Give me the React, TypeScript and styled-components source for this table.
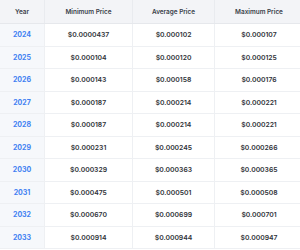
import styled, { createGlobalStyle } from 'styled-components';

const Global = createGlobalStyle`
	body {
		margin: 0;
		background: #ffffff;
		font-family: Inter, "Noto Sans", sans-serif;
	}
`;

const Table = styled.table`
	width: 300px;
	border-collapse: collapse;
	table-layout: fixed;
`;

const HeadCell = styled.th<{ $w: number }>`
	width: ${(p) => p.$w}px;
	height: 23px;
	padding: 0;
	background: #f3f4f7;
	color: #3a3f4a;
	font-size: 6.4px;
	font-weight: 600;
	text-align: center;
	border-right: 1px solid #e9ebef;
	border-bottom: 1px solid #e6e8ec;
	&:last-child {
		border-right: none;
	}
`;

const Row = styled.tr`
	height: 22.5px;
	border-bottom: 1px solid #eef0f3;
`;

const YearCell = styled.td`
	padding: 0;
	background: #f6f8fb;
	color: #3f80f2;
	font-size: 7px;
	font-weight: 700;
	text-align: center;
	border-right: 1px solid #eef0f3;
`;

const PriceCell = styled.td`
	padding: 0;
	color: #2f3238;
	font-size: 6.8px;
	font-weight: 600;
	text-align: center;
	border-right: 1px solid #eef0f3;
	&:last-child {
		border-right: none;
	}
`;

const rows = [
	['2024', '$0.0000437', '$0.000102', '$0.000107'],
	['2025', '$0.000104', '$0.000120', '$0.000125'],
	['2026', '$0.000143', '$0.000158', '$0.000176'],
	['2027', '$0.000187', '$0.000214', '$0.000221'],
	['2028', '$0.000187', '$0.000214', '$0.000221'],
	['2029', '$0.000231', '$0.000245', '$0.000266'],
	['2030', '$0.000329', '$0.000363', '$0.000365'],
	['2031', '$0.000475', '$0.000501', '$0.000508'],
	['2032', '$0.000670', '$0.000699', '$0.000701'],
	['2033', '$0.000914', '$0.000944', '$0.000947'],
];

export default function App() {
	return (
		<>
			<Global />
			<Table>
				<thead>
					<tr>
						<HeadCell $w={44}>Year</HeadCell>
						<HeadCell $w={87}>Minimum Price</HeadCell>
						<HeadCell $w={81}>Average Price</HeadCell>
						<HeadCell $w={88}>Maximum Price</HeadCell>
					</tr>
				</thead>
				<tbody>
					{rows.map(([year, min, avg, max]) => (
						<Row key={year}>
							<YearCell>{year}</YearCell>
							<PriceCell>{min}</PriceCell>
							<PriceCell>{avg}</PriceCell>
							<PriceCell>{max}</PriceCell>
						</Row>
					))}
				</tbody>
			</Table>
		</>
	);
}
